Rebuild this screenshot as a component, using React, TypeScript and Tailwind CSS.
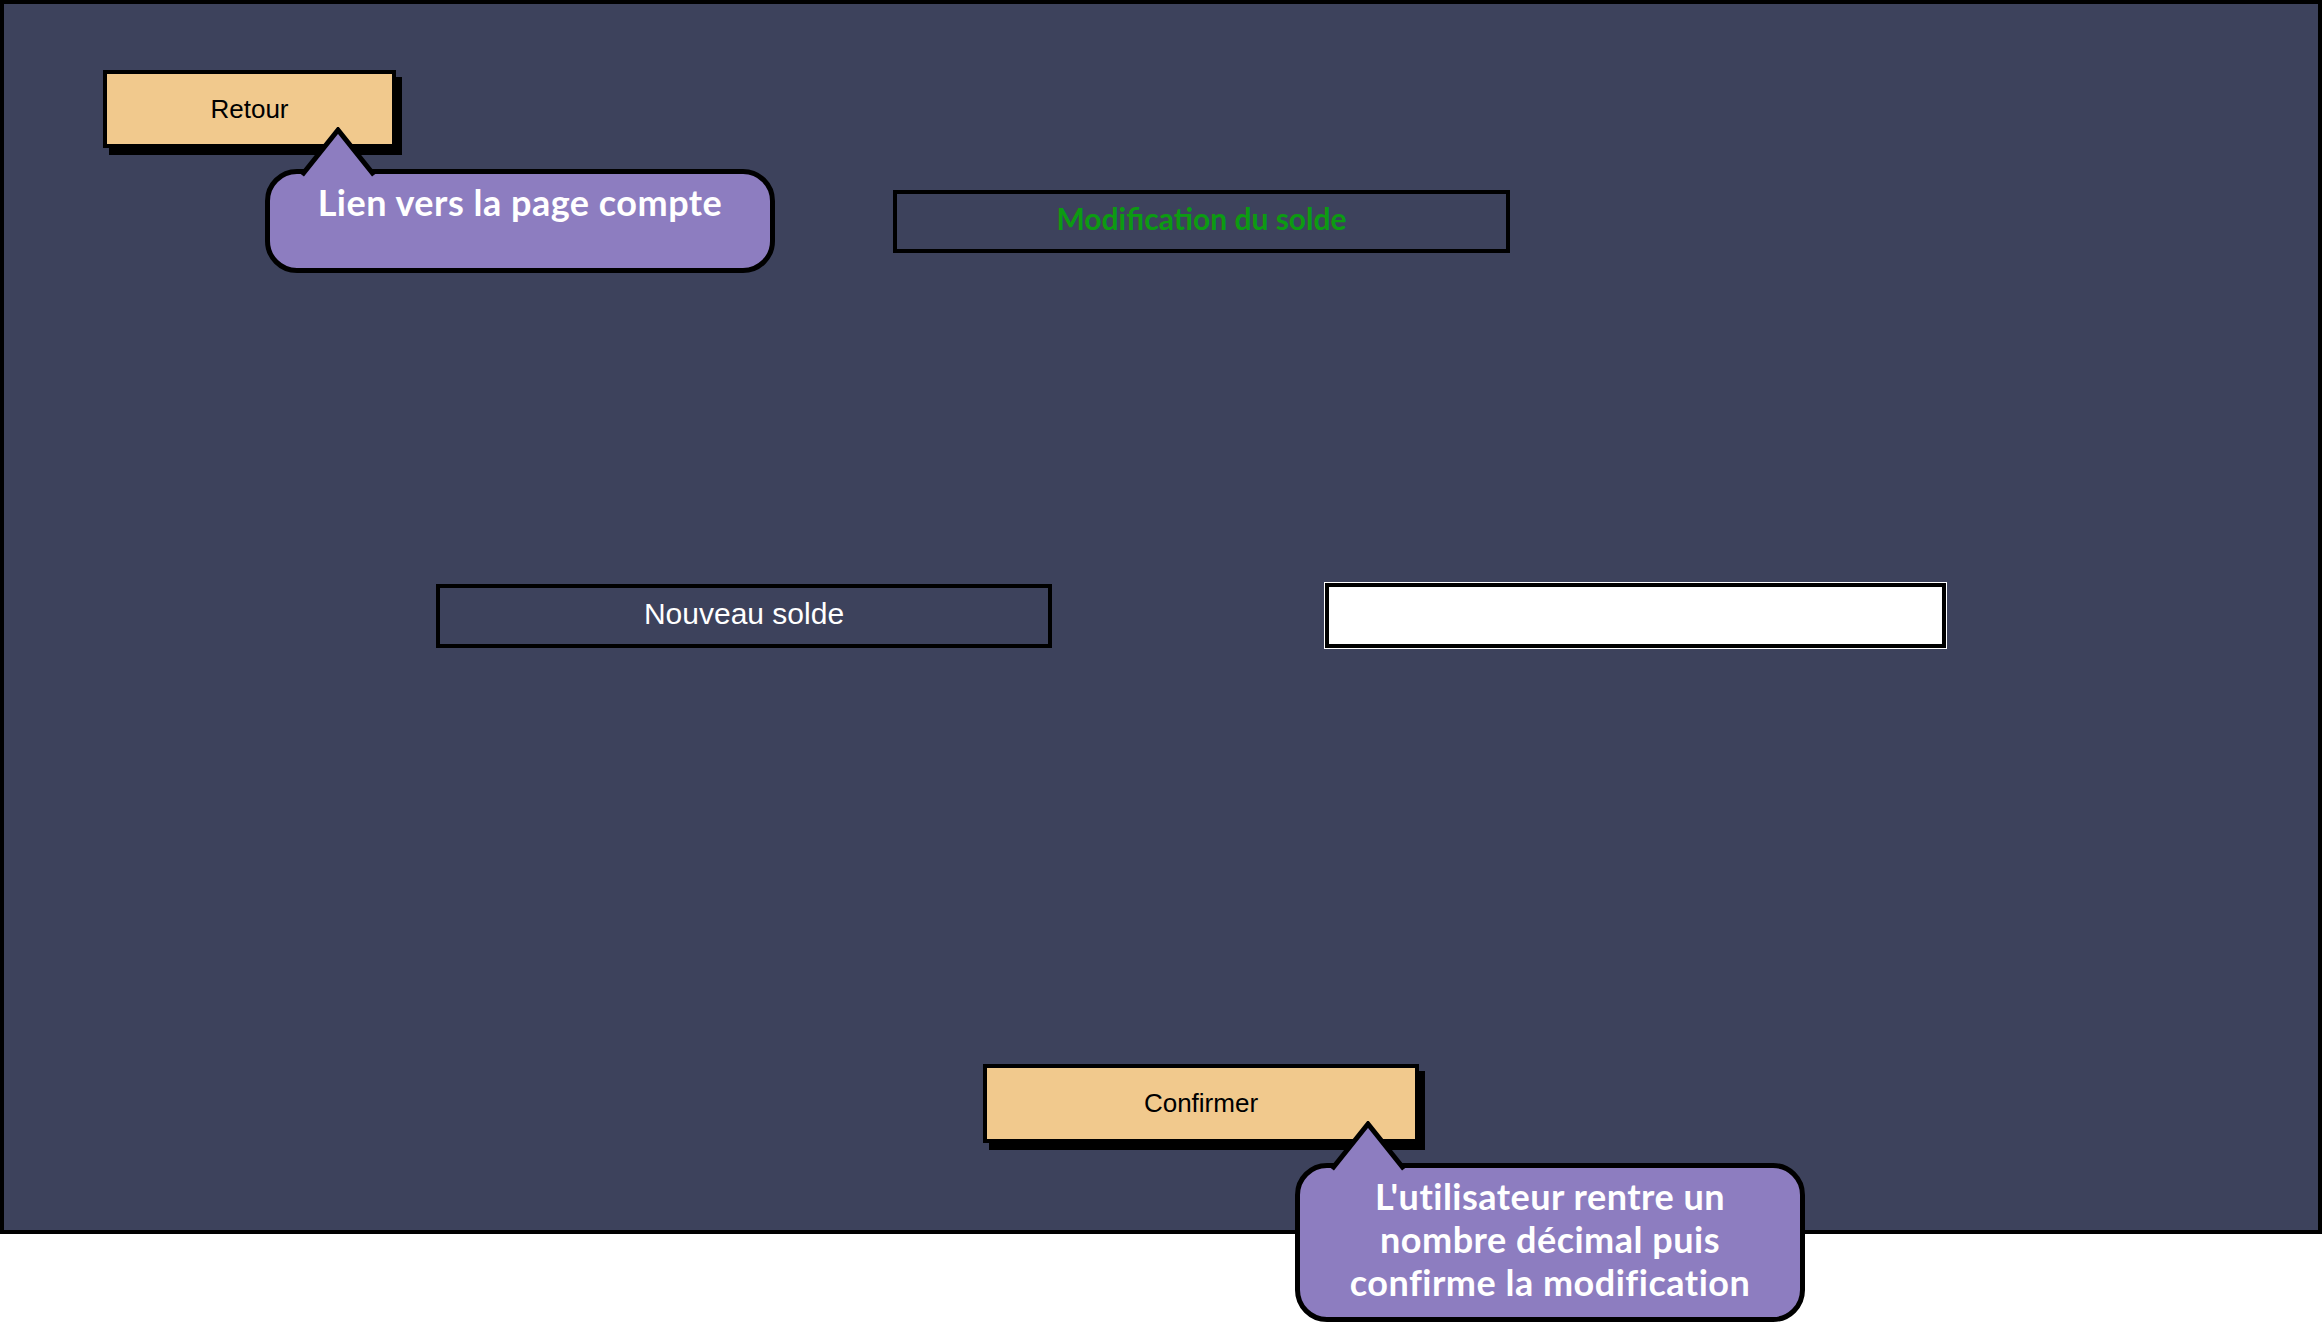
import React from 'react';

const bubbleFont = { fontFamily: 'Lato, "Noto Sans", sans-serif' };
const uiFont = { fontFamily: '"Liberation Sans", Arial, sans-serif' };

function Pointer() {
  // triangle on top of a callout, covers the bubble's top border
  return (
    <svg
      width="80"
      height="54"
      viewBox="0 0 80 54"
      className="absolute"
      style={{ left: 28, top: -47 }}
    >
      <polygon points="40,3 0,53 80,53" fill="#8d7dc0" />
      <polyline
        points="4,48 40,3 76,48"
        fill="none"
        stroke="#000"
        strokeWidth="5"
        strokeLinejoin="miter"
      />
    </svg>
  );
}

function Callout({ className, children }: { className: string; children: React.ReactNode }) {
  return (
    <div
      className={`absolute rounded-[32px] border-[5px] border-black bg-[#8d7dc0] px-2 pt-[7px] text-center text-[36px] font-bold leading-[43px] tracking-[0.5px] text-white ${className}`}
      style={bubbleFont}
    >
      <Pointer />
      {children}
    </div>
  );
}

export default function App() {
  return (
    <div className="h-[1324px] w-[2324px] overflow-hidden bg-white">
      <div className="relative flex h-[1234px] w-[2322px] flex-col items-start border-4 border-black bg-[#3d425c]">
        <button
          className="ml-[99px] mt-[66px] flex h-[78px] w-[293px] items-center justify-center border-4 border-black bg-[#f1c98d] text-[26px] text-black shadow-[6px_7px_0_#000]"
          style={uiFont}
        >
          Retour
        </button>

        <div
          className="ml-[889px] mt-[42px] flex h-[63px] w-[617px] items-center justify-center border-4 border-black pb-[6px] text-[30px] font-bold text-[#0c9b12]"
          style={bubbleFont}
        >
          Modification du solde
        </div>

        <div className="ml-[432px] mt-[330px] flex items-center gap-[273px]">
          <div
            className="flex h-[64px] w-[616px] items-center justify-center border-4 border-black pb-[4px] text-[30px] text-white"
            style={uiFont}
          >
            Nouveau solde
          </div>
          <div className="h-[65px] w-[621px] border-4 border-black bg-white shadow-[0_0_0_1px_#fff]" />
        </div>

        <button
          className="ml-[979px] mt-[416px] flex h-[79px] w-[436px] items-center justify-center border-4 border-black bg-[#f1c98d] text-[26px] text-black shadow-[6px_7px_0_#000]"
          style={uiFont}
        >
          Confirmer
        </button>

        <Callout className="left-[261px] top-[165px] h-[104px] w-[510px]">Lien vers la page compte</Callout>
        <Callout className="left-[1291px] top-[1159px] h-[159px] w-[510px]">
          L'utilisateur rentre un
          <br />
          nombre décimal puis
          <br />
          confirme la modification
        </Callout>
      </div>
    </div>
  );
}
